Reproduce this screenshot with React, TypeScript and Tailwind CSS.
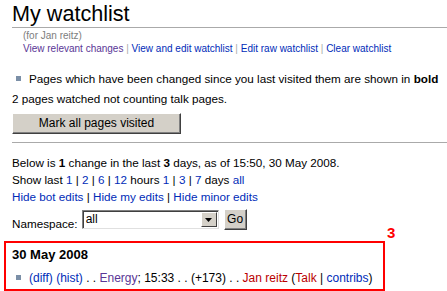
import * as React from "react";

const blue = "text-[#002bb8]";
const purple = "text-[#5a3696]";
const red = "text-[#ba0000]";

function Bullet() {
  return <span className="inline-block w-[5px] h-[5px] bg-[#7b8fa7] mr-[8px] mb-[3px] align-middle" />;
}

export default function App() {
  return (
    <div
      className="relative w-[447px] h-[291px] overflow-hidden bg-white text-black text-[11.7px]"
      style={{ fontFamily: '"Liberation Sans", Arial, sans-serif' }}
    >
      <h1 className="ml-[12px] h-[28px] border-b border-[#aaaaaa] text-[21.6px] leading-[27px] font-normal">
        My watchlist
      </h1>

      <div className="pl-[23px] text-[10px] leading-[13px] mt-[1px]">
        <div className="text-[#7d7d7d]">(for Jan reitz)</div>
        <div>
          <span className={purple}>View relevant changes</span>
          <span className="text-[#aaaaaa]"> | </span>
          <span className={blue}>View and edit watchlist</span>
          <span className="text-[#aaaaaa]"> | </span>
          <span className={blue}>Edit raw watchlist</span>
          <span className="text-[#aaaaaa]"> | </span>
          <span className={blue}>Clear watchlist</span>
        </div>
      </div>

      <div className="mt-[15px] pl-[16px] leading-[17px] whitespace-nowrap">
        <Bullet />
        Pages which have been changed since you last visited them are shown in <b>bold</b>
      </div>

      <div className="mt-[3px] pl-[12px] leading-[17px]">2 pages watched not counting talk pages.</div>

      <div className="pl-[12px] mt-[6px]">
        <button className="w-[169px] h-[21px] bg-[#d4d0c8] border border-t-white border-l-white border-r-[#404040] border-b-[#404040] shadow-[inset_-1px_-1px_0_#808080] text-[12px] leading-[17px]">
          Mark all pages visited
        </button>
      </div>

      <div className="ml-[12px] mt-[8px] border-t border-[#aaaaaa]" />

      <div className="pl-[12px] mt-[11px] leading-[17px]">
        <div>
          Below is <b>1</b> change in the last <b>3</b> days, as of 15:50, 30 May 2008.
        </div>
        <div>
          Show last <span className={blue}>1</span> | <span className={blue}>2</span> |{" "}
          <span className={blue}>6</span> | <span className={blue}>12</span> hours{" "}
          <span className={blue}>1</span> | <span className={blue}>3</span> |{" "}
          <span className={blue}>7</span> days <span className={blue}>all</span>
        </div>
        <div>
          <span className={blue}>Hide bot edits</span> | <span className={blue}>Hide my edits</span> |{" "}
          <span className={blue}>Hide minor edits</span>
        </div>
      </div>

      <div className="pl-[12px] mt-[4px] flex items-start gap-[4px]">
        <span className="mt-[6px] leading-[17px]">Namespace:</span>
        <div className="mt-[1px] flex w-[137px] h-[19px] border border-t-[#808080] border-l-[#808080] border-r-[#e0e0e0] border-b-[#e0e0e0] shadow-[inset_1px_1px_0_#404040] bg-white">
          <span className="flex-1 pl-[3px] leading-[17px] text-[12px]">all</span>
          <span className="w-[16px] h-[15px] mt-[1px] mr-[1px] bg-[#d4d0c8] border border-t-white border-l-white border-r-[#404040] border-b-[#404040] flex items-center justify-center">
            <svg width="7" height="4" viewBox="0 0 7 4">
              <path d="M0 0h7L3.5 4z" fill="#000" />
            </svg>
          </span>
        </div>
        <button className="ml-[1px] w-[23px] h-[21px] bg-[#d4d0c8] border border-t-white border-l-white border-r-[#404040] border-b-[#404040] shadow-[inset_-1px_-1px_0_#808080] text-[12px] leading-[17px]">
          Go
        </button>
      </div>

      <div className="ml-[4px] mt-[9px] w-[381px] h-[50px] border-2 border-[#ff0000] pl-[6px]">
        <div className="mt-[3px] font-bold text-[13px] leading-[18px]">30 May 2008</div>
        <div className="mt-[6px] pl-[4px] leading-[17px] whitespace-nowrap text-[12px]">
          <Bullet />
          <span className={blue}>(diff)</span> <span className={blue}>(hist)</span> . .{" "}
          <span className={purple}>Energy</span>; 15:33 . . (+173) . .{" "}
          <span className={red}>Jan reitz</span> (<span className={red}>Talk</span> |{" "}
          <span className={blue}>contribs</span>)
        </div>
      </div>

      <span className="absolute left-[387px] top-[224px] text-[#ff0000] font-bold text-[15px] leading-[17px]">3</span>
    </div>
  );
}
